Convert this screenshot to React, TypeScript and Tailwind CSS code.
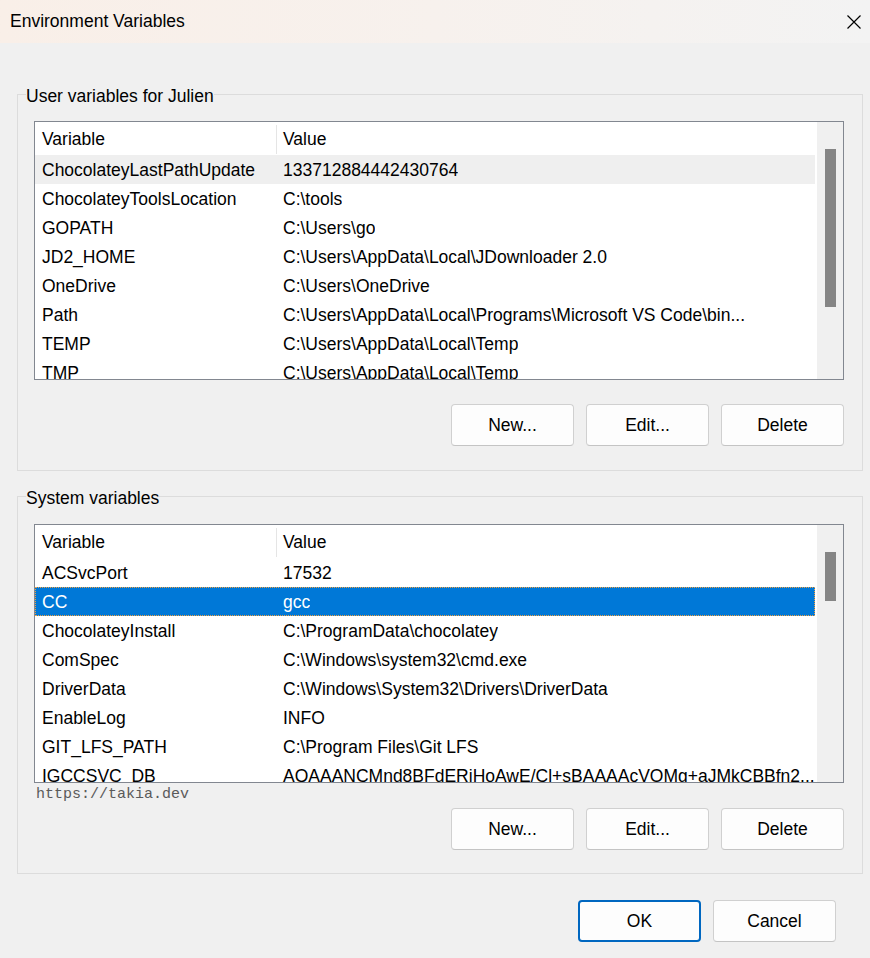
import React from 'react';

const userVars: [string, string][] = [
  ['ChocolateyLastPathUpdate', '133712884442430764'],
  ['ChocolateyToolsLocation', 'C:\\tools'],
  ['GOPATH', 'C:\\Users\\go'],
  ['JD2_HOME', 'C:\\Users\\AppData\\Local\\JDownloader 2.0'],
  ['OneDrive', 'C:\\Users\\OneDrive'],
  ['Path', 'C:\\Users\\AppData\\Local\\Programs\\Microsoft VS Code\\bin...'],
  ['TEMP', 'C:\\Users\\AppData\\Local\\Temp'],
  ['TMP', 'C:\\Users\\AppData\\Local\\Temp'],
];

const systemVars: [string, string][] = [
  ['ACSvcPort', '17532'],
  ['CC', 'gcc'],
  ['ChocolateyInstall', 'C:\\ProgramData\\chocolatey'],
  ['ComSpec', 'C:\\Windows\\system32\\cmd.exe'],
  ['DriverData', 'C:\\Windows\\System32\\Drivers\\DriverData'],
  ['EnableLog', 'INFO'],
  ['GIT_LFS_PATH', 'C:\\Program Files\\Git LFS'],
  ['IGCCSVC_DB', 'AQAAANCMnd8BFdERjHoAwE/Cl+sBAAAAcVOMg+aJMkCBBfn2...'],
];

const WinButton = ({ label, primary }: { label: string; primary?: boolean }) => (
  <button
    className={
      primary
        ? 'w-[123px] h-[42px] rounded-[4px] border-2 border-[#0067c0] bg-[#fdfdfd] text-[17.5px] text-black'
        : 'w-[123px] h-[42px] rounded-[4px] border border-[#d0d0d0] border-b-[#c4c4c4] bg-[#fdfdfd] text-[17.5px] text-black'
    }
  >
    {label}
  </button>
);

const VarList = ({
  rows,
  hovered,
  selected,
  thumbHeight,
}: {
  rows: [string, string][];
  hovered?: number;
  selected?: number;
  thumbHeight: string;
}) => (
  <div className="w-[810px] h-[259px] border border-[#828790] bg-white flex overflow-hidden">
    <div className="flex-1 flex flex-col overflow-hidden">
      {/* header */}
      <div className="h-[33px] shrink-0 flex items-center pt-[1px]">
        <div className="w-[241px] pl-[7px] leading-[32px]">Variable</div>
        <div className="w-px h-[29px] bg-[#e5e5e5]" />
        <div className="pl-[6px] leading-[32px]">Value</div>
      </div>
      {rows.map(([name, value], i) => {
        const isSel = i === selected;
        const isHover = i === hovered;
        return (
          <div
            key={name}
            className={
              isSel
                ? 'h-[29px] shrink-0 flex items-center pt-[2px] bg-[#0078d7] text-white outline-1 outline-dotted outline-[#f0a040] -outline-offset-1'
                : isHover
                ? 'h-[29px] shrink-0 flex items-center pt-[2px] bg-[#efefef]'
                : 'h-[29px] shrink-0 flex items-center pt-[2px]'
            }
          >
            <div className="w-[242px] pl-[7px] whitespace-nowrap overflow-hidden">{name}</div>
            <div className="pl-[6px] whitespace-nowrap overflow-hidden">{value}</div>
          </div>
        );
      })}
    </div>
    {/* scrollbar */}
    <div className="w-[28px] shrink-0 bg-[#f0f0f0] border-l-2 border-white pt-[27px] flex justify-center">
      <div className={`w-[11px] bg-[#858585] ${thumbHeight}`} />
    </div>
  </div>
);

export default function App() {
  return (
    <div
      className="w-[870px] h-[958px] bg-[#f0f0f0] text-black text-[17.5px] overflow-hidden"
      style={{ fontFamily: '"Liberation Sans", Arial, sans-serif' }}
    >
      {/* Title bar */}
      <div className="h-[43px] flex items-center justify-between pl-[10px] pr-[8px] bg-gradient-to-r from-[#f9efe8] via-[#f7f1ed] to-[#f3f3f3]">
        <span className="text-[17.5px]">Environment Variables</span>
        <svg width="16" height="16" viewBox="0 0 16 16" className="text-black">
          <path d="M1.5 1.5 L14.5 14.5 M14.5 1.5 L1.5 14.5" stroke="currentColor" strokeWidth="1.2" />
        </svg>
      </div>

      <div className="pl-[17px] pr-[8px] pt-[39px]">
        {/* User variables */}
        <fieldset className="border border-[#dcdcdc] w-[845px]">
          <legend className="ml-[8px] pt-[4px] leading-[20px] text-[17.5px]">User variables for Julien</legend>
          <div className="pl-[16px] pr-[18px] pt-[15px] pb-[24px]">
            <VarList rows={userVars} hovered={0} thumbHeight="h-[158px]" />
            <div className="mt-[24px] flex justify-end gap-[12px]">
              <WinButton label="New..." />
              <WinButton label="Edit..." />
              <WinButton label="Delete" />
            </div>
          </div>
        </fieldset>

        {/* System variables */}
        <fieldset className="border border-[#dcdcdc] w-[845px] mt-[13px]">
          <legend className="ml-[8px] pt-[4px] leading-[20px] text-[17.5px]">System variables</legend>
          <div className="pl-[16px] pr-[18px] pt-[16px] pb-[23px]">
            <VarList rows={systemVars} selected={1} thumbHeight="h-[49px]" />
            <div
              className="mt-[2px] pl-[2px] h-[20px] leading-[20px] text-[15px] text-[#5a5a5a]"
              style={{ fontFamily: '"Liberation Mono", "Courier New", monospace' }}
            >
              https://takia.dev
            </div>
            <div className="mt-[3px] flex justify-end gap-[12px]">
              <WinButton label="New..." />
              <WinButton label="Edit..." />
              <WinButton label="Delete" />
            </div>
          </div>
        </fieldset>

        {/* Footer */}
        <div className="mt-[26px] pr-[26px] flex justify-end gap-[12px]">
          <WinButton label="OK" primary />
          <WinButton label="Cancel" />
        </div>
      </div>
    </div>
  );
}
